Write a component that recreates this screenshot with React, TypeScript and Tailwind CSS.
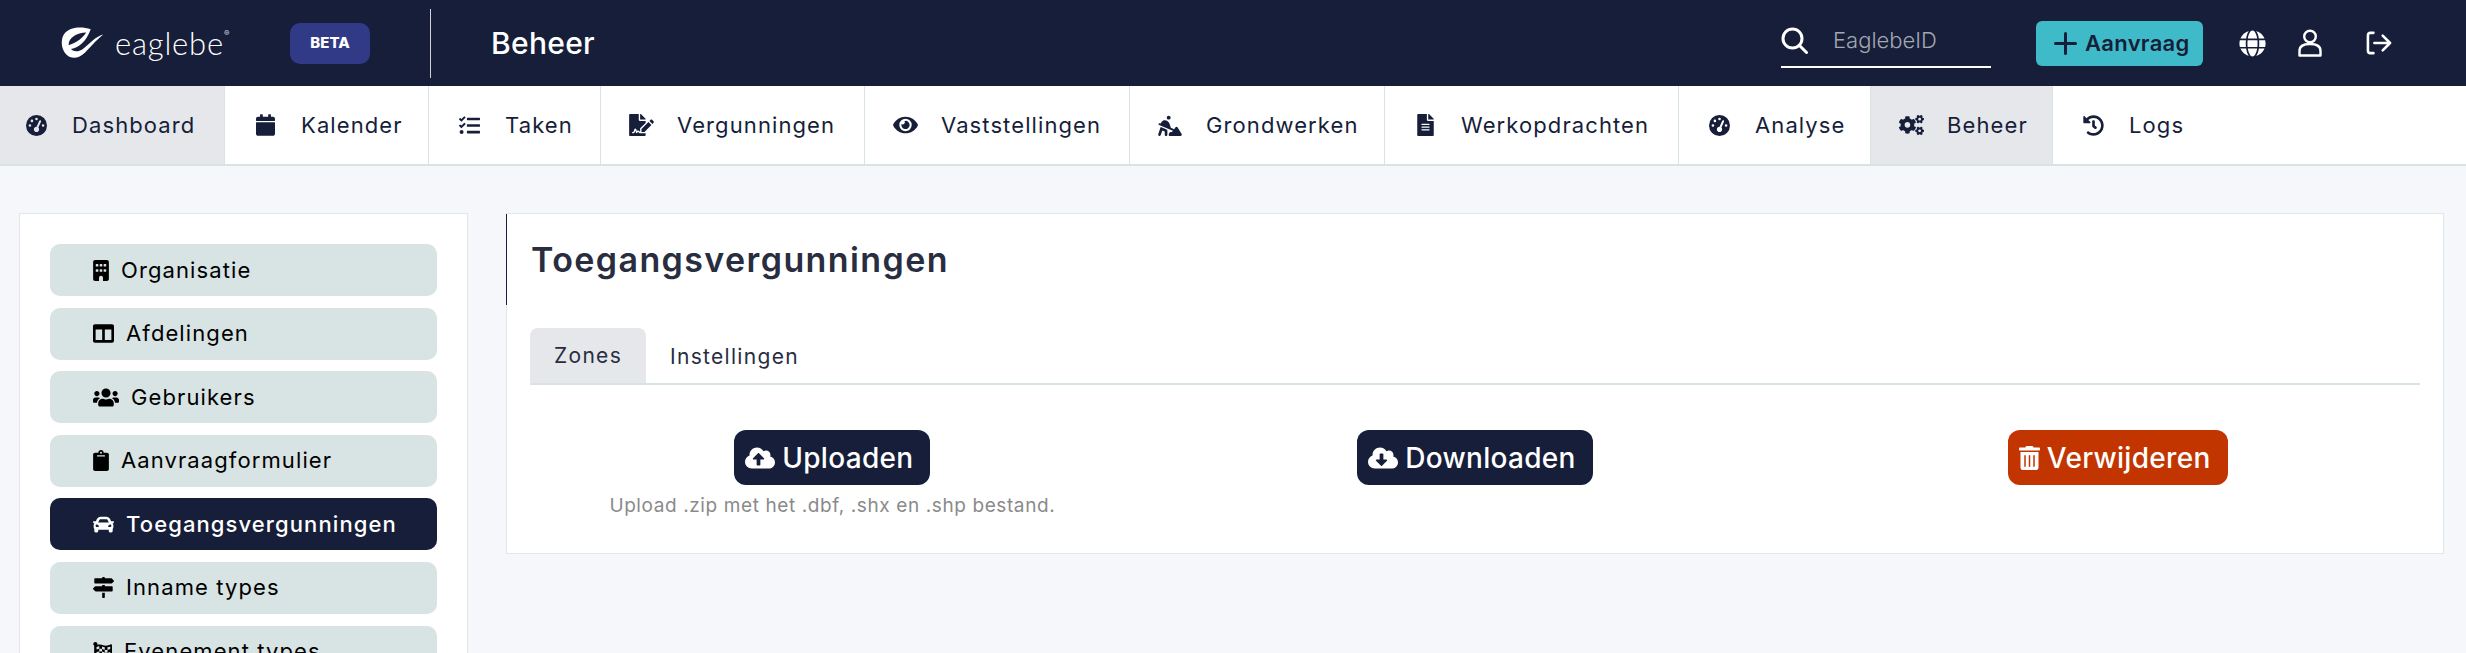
import { useState } from 'react';
import {
  FaCalendar, FaTasks, FaFileSignature, FaEye, FaFileAlt, FaCogs, FaHistory,
  FaColumns, FaUsers, FaClipboard, FaCar, FaMapSigns, FaFlagCheckered,
  FaCloudUploadAlt, FaCloudDownloadAlt, FaTrashAlt, FaGlobe,
} from 'react-icons/fa';
import { FaPersonDigging, FaGaugeHigh, FaBuilding } from 'react-icons/fa6';
import type { IconType } from 'react-icons';

const font = { fontFamily: 'Inter, "Liberation Sans", sans-serif' };

type NavItem = { label: string; icon: IconType; width: string; iconSize: string; active?: boolean };

const navItems: NavItem[] = [
  { label: 'Dashboard', icon: FaGaugeHigh, width: 'w-[225px]', iconSize: 'w-[21px] h-[21px]', active: true },
  { label: 'Kalender', icon: FaCalendar, width: 'w-[204px]', iconSize: 'w-[19px] h-[22px]' },
  { label: 'Taken', icon: FaTasks, width: 'w-[172px]', iconSize: 'w-[21px] h-[21px]' },
  { label: 'Vergunningen', icon: FaFileSignature, width: 'w-[264px]', iconSize: 'w-[25px] h-[22px]' },
  { label: 'Vaststellingen', icon: FaEye, width: 'w-[265px]', iconSize: 'w-[25px] h-[22px]' },
  { label: 'Grondwerken', icon: FaPersonDigging, width: 'w-[255px]', iconSize: 'w-[24px] h-[21px]' },
  { label: 'Werkopdrachten', icon: FaFileAlt, width: 'w-[294px]', iconSize: 'w-[17px] h-[22px]' },
  { label: 'Analyse', icon: FaGaugeHigh, width: 'w-[192px]', iconSize: 'w-[21px] h-[21px]' },
  { label: 'Beheer', icon: FaCogs, width: 'w-[182px]', iconSize: 'w-[25px] h-[20px]', active: true },
  { label: 'Logs', icon: FaHistory, width: 'w-[160px]', iconSize: 'w-[21px] h-[21px]' },
];

const sideItems: { label: string; icon: IconType; iconWidth: string; active?: boolean }[] = [
  { label: 'Organisatie', icon: FaBuilding, iconWidth: 'w-[16px]' },
  { label: 'Afdelingen', icon: FaColumns, iconWidth: 'w-[21px]' },
  { label: 'Gebruikers', icon: FaUsers, iconWidth: 'w-[26px]' },
  { label: 'Aanvraagformulier', icon: FaClipboard, iconWidth: 'w-[16px]' },
  { label: 'Toegangsvergunningen', icon: FaCar, iconWidth: 'w-[21px]', active: true },
  { label: 'Inname types', icon: FaMapSigns, iconWidth: 'w-[21px]' },
  { label: 'Evenement types', icon: FaFlagCheckered, iconWidth: 'w-[19px]' },
];

function Logo() {
  return (
    <div className="flex items-center w-[167px]">
      <svg viewBox="33 35 128 97" className="w-[43px] h-[32px] shrink-0" fill="#fff">
        <path
          fillRule="evenodd"
          d="M122 42 C95 32 60 35 45 52 C30 68 30 100 48 118 C62 132 85 132 105 112 C120 98 135 78 160 58 C135 65 120 85 100 100 C88 110 72 112 62 102 C88 98 108 78 122 42 Z M55 90 C54 68 80 52 108 52 C98 68 82 82 55 90 Z"
        />
      </svg>
      <span className="ml-[11px] text-[31px] font-light text-white leading-none tracking-[0.8px]" style={{ fontFamily: 'Lato, sans-serif' }}>eaglebe</span>
      <span className="text-[8px] text-white/80 -mt-[20px]">®</span>
    </div>
  );
}

function Header() {
  return (
    <header className="h-[86px] bg-[#161e39] flex items-center text-white">
      <div className="ml-[61px]"><Logo /></div>
      <div className="ml-[62px] w-[80px] h-[41px] rounded-[10px] bg-[#313a87] flex items-center justify-center text-[15px] font-extrabold">
        BETA
      </div>
      <div className="ml-[60px] w-px h-[69px] bg-white/80" />
      <div className="ml-[60px] text-[30px] font-medium tracking-[0.3px]">Beheer</div>

      <div className="ml-auto flex items-center">
        <div className="w-[210px] h-[46px] mt-[3px] border-b-2 border-white flex items-center pb-[6px]">
          <svg viewBox="0 0 27 27" className="w-[27px] h-[27px]" fill="none" stroke="#fff" strokeWidth="3" strokeLinecap="round">
            <circle cx="11.500" cy="11.500" r="9.500" />
            <path d="M18.500 18.500 L25.500 25.500" />
          </svg>
          <span className="ml-[25px] text-[22px] text-[#a3a7b2] font-light">EaglebeID</span>
        </div>
        <button className="ml-[45px] w-[167px] h-[45px] rounded-[6px] bg-[#3fbac8] text-[#161e39] flex items-center pl-[18px] font-semibold text-[22px] tracking-[0.3px]">
          <svg viewBox="0 0 23 23" className="w-[23px] h-[23px]" fill="none" stroke="#161e39" strokeWidth="3" strokeLinecap="round">
            <path d="M11.500 1.500 V21.500 M1.500 11.500 H21.500" />
          </svg>
          <span className="ml-[8px]">Aanvraag</span>
        </button>
        <FaGlobe className="ml-[36px] w-[27px] h-[27px]" />
        <svg viewBox="0 0 24 28" className="ml-[32px] w-[24px] h-[28px]" fill="none" stroke="#fff" strokeWidth="2.400">
          <circle cx="12" cy="7.500" r="5.800" />
          <path d="M1.500 26.500 V22 C1.500 17 6 15 12 15 C18 15 22.500 17 22.500 22 V26.500 Z" strokeLinejoin="round" />
        </svg>
        <svg viewBox="0 0 28 26" className="ml-[43px] mr-[73px] w-[28px] h-[24px]" fill="none" stroke="#fff" strokeWidth="2.800" strokeLinecap="round" strokeLinejoin="round">
          <path d="M8 2 H4.500 C3 2 2 3 2 4.500 V21.500 C2 23 3 24 4.500 24 H8" />
          <path d="M9 13 H26 M18 5 L26 13 L18 21" />
        </svg>
      </div>
    </header>
  );
}

function Nav() {
  return (
    <nav className="h-[80px] bg-white border-b-2 border-[#d8e3e3] flex">
      {navItems.map((item) => (
        <a
          key={item.label}
          className={`${item.width} flex items-center pl-[29px] first:pl-[25px] text-[22px] tracking-[1.1px] text-[#161e39] ${item.label === 'Logs' ? '' : 'border-r border-[#d8e3e3]'} ${item.active ? 'bg-[#e5e7eb]' : 'bg-white'}`}
        >
          <span className="w-[22px] flex justify-center shrink-0">
            <item.icon className={`${item.iconSize} shrink-0`} />
          </span>
          <span className="ml-[25px]">{item.label}</span>
        </a>
      ))}
    </nav>
  );
}

function Sidebar() {
  return (
    <aside className="w-[449px] shrink-0 bg-white border border-[#dfe7e7] p-[30px] flex flex-col gap-[11.6px]">
      {sideItems.map((item) => (
        <a
          key={item.label}
          className={`h-[52px] shrink-0 rounded-[10px] pl-[43px] flex items-center gap-[12px] text-[22px] tracking-[1.1px] ${item.active ? 'bg-[#161e39] text-white font-medium' : 'bg-[#d8e3e3] text-black'}`}
        >
          <item.icon className={`${item.iconWidth} h-[21px] shrink-0`} />
          <span>{item.label}</span>
        </a>
      ))}
    </aside>
  );
}

function ActionButton({ icon: Icon, iconWidth, label, red, hint }: { icon: IconType; iconWidth: string; label: string; red?: boolean; hint?: string }) {
  return (
    <div className="flex flex-col items-center">
      <button className={`h-[55px] pl-[11px] pr-[17px] rounded-[12px] flex items-center gap-[7px] text-white text-[28px] tracking-[0.3px] font-medium ${red ? 'bg-[#c23500]' : 'bg-[#161e39]'}`}>
        <Icon className={`${iconWidth} h-[24px]`} />
        {label}
      </button>
      {hint && <p className="mt-[7px] text-[19px] text-[#8a8a8a] tracking-[0.6px]">{hint}</p>}
    </div>
  );
}

function Content() {
  const [tab, setTab] = useState('Zones');
  return (
    <main className="flex-1 h-[341px] bg-white border border-[#dfe7e7]">
      <div className="h-[91px] -ml-px border-l border-[#161e39] pl-[24px] flex items-center">
        <h1 className="text-[34px] font-semibold text-[#282d3f] tracking-[1.4px]">Toegangsvergunningen</h1>
      </div>
      <div className="mx-[23px] mt-[23px] h-[57px] border-b-2 border-[#d8e3e3] flex text-[21px] tracking-[1.3px] text-[#282d3f]">
        {['Zones', 'Instellingen'].map((t) => (
          <button
            key={t}
            onClick={() => setTab(t)}
            className={`h-[57px] px-[24px] rounded-t-[8px] ${tab === t ? 'bg-[#e5e7eb] border-b-2 border-[#d8e3e3]' : ''}`}
          >
            {t}
          </button>
        ))}
      </div>
      <div className="mt-[45px] mx-[4px] grid grid-cols-3">
        <ActionButton icon={FaCloudUploadAlt} iconWidth="w-[30px]" label="Uploaden" hint="Upload .zip met het .dbf, .shx en .shp bestand." />
        <ActionButton icon={FaCloudDownloadAlt} iconWidth="w-[30px]" label="Downloaden" />
        <ActionButton icon={FaTrashAlt} iconWidth="w-[21px]" label="Verwijderen" red />
      </div>
    </main>
  );
}

export default function App() {
  return (
    <div className="h-screen overflow-hidden bg-[#f5f7fa]" style={font}>
      <Header />
      <Nav />
      <div className="flex items-start pt-[47px] pl-[19px] pr-[22px] gap-[38px]">
        <Sidebar />
        <Content />
      </div>
    </div>
  );
}
